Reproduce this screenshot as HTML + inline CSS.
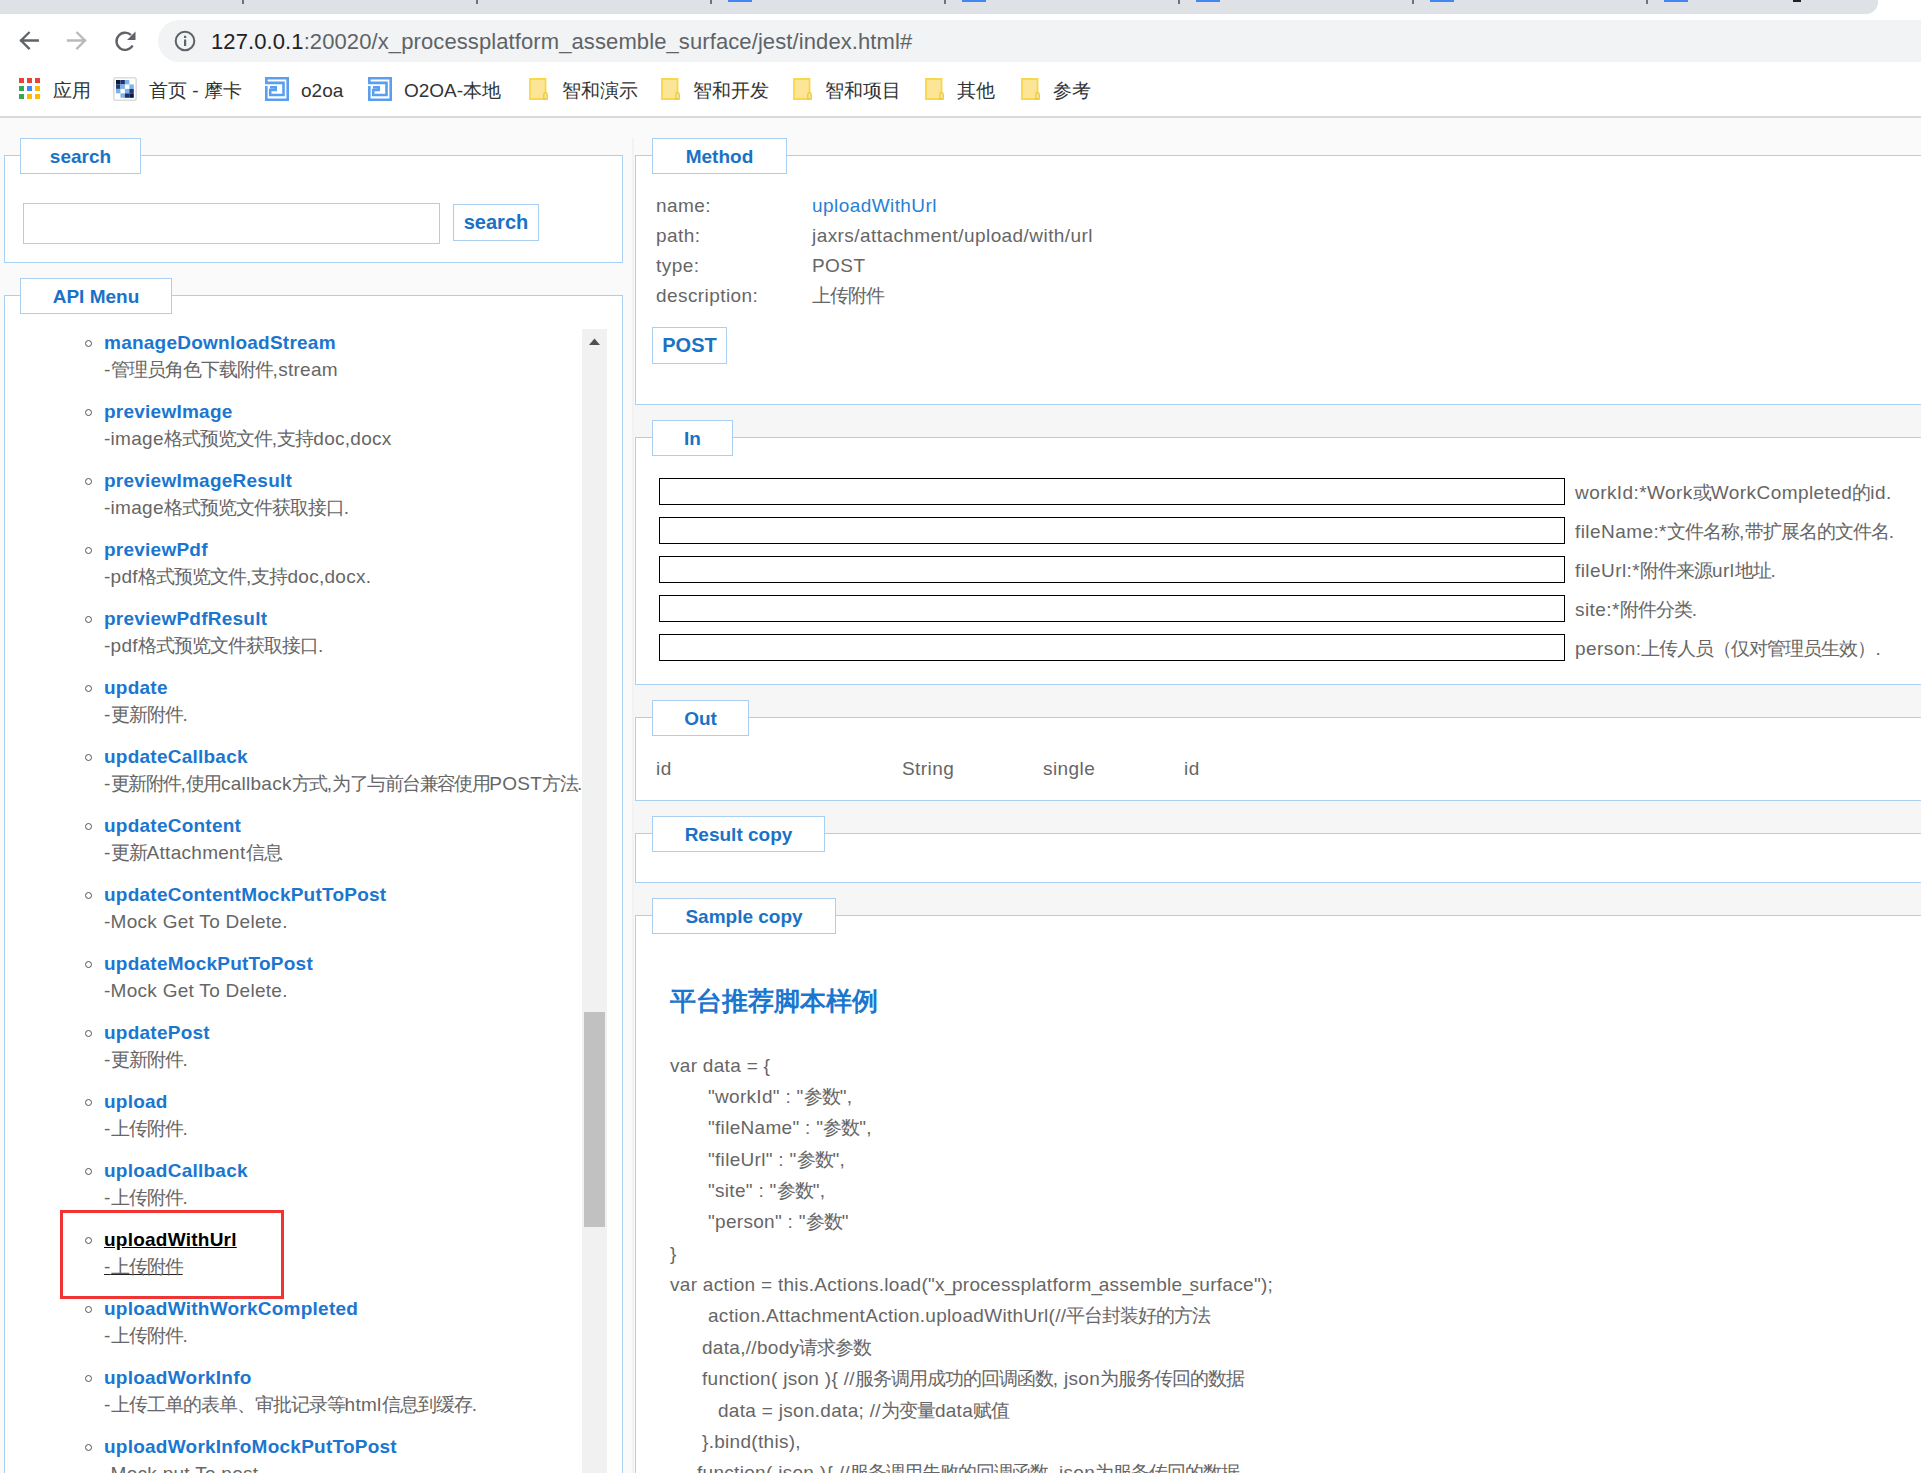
<!DOCTYPE html>
<html><head><meta charset="utf-8">
<style>
*{box-sizing:border-box;margin:0;padding:0}
html,body{width:1921px;height:1473px;overflow:hidden;background:#fafafa;font-family:"Liberation Sans",sans-serif}
.a{position:absolute}
#tabs{left:0;top:0;width:1878px;height:14px;background:#dee1e6;border-bottom-right-radius:12px}
.sep{position:absolute;top:0;width:1.5px;height:4px;background:#6f7378}
.fav{position:absolute;top:0;width:24px;height:1.5px;background:#4285f4}
#toolbar{left:0;top:0;width:1921px;height:116px;background:#fff}
#omni{left:158px;top:20px;width:1800px;height:42px;background:#f1f3f4;border-radius:21px}
#url{left:211px;top:29px;font-size:22px;line-height:25px;color:#5f6368;white-space:nowrap;letter-spacing:0.1px}
#url b{font-weight:normal;color:#202124}
#bmline{left:0;top:116px;width:1921px;height:2px;background:#d9d9d9}
.bm{position:absolute;top:79px;font-size:19px;line-height:24px;color:#333;white-space:nowrap}
.fs{position:absolute;border:1px solid #a9d0f2;background:#fff}
.lg{position:absolute;border:1px solid #a9d0f2;background:#fff;color:#1a72c6;font-weight:bold;font-size:19px;text-align:center;line-height:35px}

.inp{position:absolute;border:1px solid #a9d0f2;background:#fff}
.btn{position:absolute;border:1px solid #a9d0f2;background:#fff;color:#1a72c6;font-weight:bold;font-size:20px;text-align:center}
#list{position:absolute;left:0;top:329px;width:582px;height:1144px;overflow:hidden}
.it{position:absolute;left:104px;white-space:nowrap}
.nm{font-weight:bold;color:#1b76cf;font-size:19px;line-height:24px;height:27px;letter-spacing:0.24px}
.ds{color:#666;font-size:19px;line-height:24px;letter-spacing:0.28px}
.ds .c{font-size:19px;letter-spacing:-1px;line-height:0}
.n7 .c{font-size:19px;letter-spacing:-1.55px}
.bul{position:absolute;left:84.5px;width:7px;height:7px;border:1.2px solid #555;border-radius:50%;margin-top:0.5px}
#sb{position:absolute;left:582px;top:329px;width:25px;height:1144px;background:#f1f1f1}
#thumb{position:absolute;left:584px;top:1012px;width:21px;height:215px;background:#c1c1c1}
.row{position:absolute;font-size:19px;color:#666;white-space:nowrap;line-height:22px;letter-spacing:0.43px}
.row .c{font-size:19px;letter-spacing:-1px;line-height:0}
.pin{position:absolute;left:659px;width:906px;height:27px;border:1px solid #000;background:#fff}
.plb{position:absolute;left:1575px;font-size:19px;color:#666;white-space:nowrap;line-height:22px;letter-spacing:0.43px}
.plb .c{font-size:19px;letter-spacing:-1px;line-height:0}
.code{position:absolute;font-size:19px;color:#666;white-space:nowrap;line-height:22px;letter-spacing:0.3px}
.code .c{font-size:19px;letter-spacing:-1px;line-height:0}
.code .u{letter-spacing:-3.5px}
</style></head><body>
<div id="toolbar" class="a"></div>
<div id="tabs" class="a">
 <div class="sep" style="left:242px"></div><div class="sep" style="left:476px"></div><div class="sep" style="left:710px"></div><div class="sep" style="left:944px"></div><div class="sep" style="left:1178px"></div><div class="sep" style="left:1412px"></div><div class="sep" style="left:1646px"></div>
 <div class="fav" style="left:728px"></div><div class="fav" style="left:962px"></div><div class="fav" style="left:1196px"></div><div class="fav" style="left:1430px"></div><div class="fav" style="left:1664px"></div><div class="fav" style="left:1793px;width:8px;background:#202124"></div>
</div>
<div id="omni" class="a"></div>
<div id="url" class="a"><b>127.0.0.1</b>:20020/x_processplatform_assemble_surface/jest/index.html#</div>
<div id="bmline" class="a"></div>

<!-- nav icons -->
<svg class="a" style="left:14px;top:26px" width="30" height="30" viewBox="0 0 30 30"><path d="M23.8 14.5H7M14.8 6.8L7 14.5l7.8 7.8" fill="none" stroke="#5f6368" stroke-width="2.3" stroke-linecap="square"/></svg>
<svg class="a" style="left:62px;top:26px" width="30" height="30" viewBox="0 0 30 30"><path d="M6 14.5h17M15.3 6.8L23 14.5l-7.8 7.8" fill="none" stroke="#b8babd" stroke-width="2.3" stroke-linecap="square"/></svg>
<svg class="a" style="left:110px;top:26px" width="30" height="30" viewBox="0 0 30 30"><path d="M22.6 19.5A8.6 8.6 0 1 1 21 9" fill="none" stroke="#5f6368" stroke-width="2.4"/><path d="M25.5 5.5v8.5h-8.5z" fill="#5f6368"/></svg>
<svg class="a" style="left:173px;top:29px" width="24" height="24" viewBox="0 0 24 24"><circle cx="12" cy="12" r="9.3" fill="none" stroke="#5f6368" stroke-width="2"/><rect x="11" y="10.5" width="2.2" height="6.5" fill="#5f6368"/><rect x="11" y="6.8" width="2.2" height="2.2" fill="#5f6368"/></svg>
<!-- bookmarks -->
<svg class="a" style="left:19px;top:78px" width="21" height="21" viewBox="0 0 21 21">
<rect x="0" y="0" width="5" height="5" fill="#ea4335"/><rect x="8" y="0" width="5" height="5" fill="#ea4335"/><rect x="16" y="0" width="5" height="5" fill="#ea4335"/>
<rect x="0" y="8" width="5" height="5" fill="#34a853"/><rect x="8" y="8" width="5" height="5" fill="#4285f4"/><rect x="16" y="8" width="5" height="5" fill="#fbbc04"/>
<rect x="0" y="16" width="5" height="5" fill="#34a853"/><rect x="8" y="16" width="5" height="5" fill="#fbbc04"/><rect x="16" y="16" width="5" height="5" fill="#fbbc04"/></svg>
<div class="bm" style="left:53px"><span class="c">应用</span></div>
<svg class="a" style="left:113px;top:77px" width="24" height="24" viewBox="0 0 24 24"><rect x="0.8" y="0.8" width="22.4" height="22.4" rx="2" fill="#fff" stroke="#dcdcdc" stroke-width="1.6"/><rect x="3.00" y="3.00" width="4.45" height="4.45" fill="#0a1a3a"/><rect x="7.45" y="3.00" width="4.45" height="4.45" fill="#1a3370"/><rect x="11.90" y="3.00" width="4.45" height="4.45" fill="#7fb3e8"/><rect x="3.00" y="7.45" width="4.45" height="4.45" fill="#1f3a7a"/><rect x="7.45" y="7.45" width="4.45" height="4.45" fill="#7fb3e8"/><rect x="16.35" y="7.45" width="4.45" height="4.45" fill="#7fb3e8"/><rect x="3.00" y="11.90" width="4.45" height="4.45" fill="#7fb3e8"/><rect x="11.90" y="11.90" width="4.45" height="4.45" fill="#7fb3e8"/><rect x="16.35" y="11.90" width="4.45" height="4.45" fill="#1f3a7a"/><rect x="7.45" y="16.35" width="4.45" height="4.45" fill="#7fb3e8"/><rect x="11.90" y="16.35" width="4.45" height="4.45" fill="#1a3370"/><rect x="16.35" y="16.35" width="4.45" height="4.45" fill="#0a1a3a"/></svg>
<div class="bm" style="left:149px"><span class="c">首页</span> - <span class="c">摩卡</span></div>
<svg class="a" style="left:265px;top:77px" width="24" height="24" viewBox="0 0 24 24"><path d="M1.3 9V22.7H22.7V1.3H1.3V5.9H18.5V18H5.2V13H10.7V10.3H5" fill="none" stroke="#5a9ef0" stroke-width="2.6"/></svg>
<div class="bm" style="left:301px">o2oa</div>
<svg class="a" style="left:368px;top:77px" width="24" height="24" viewBox="0 0 24 24"><path d="M1.3 9V22.7H22.7V1.3H1.3V5.9H18.5V18H5.2V13H10.7V10.3H5" fill="none" stroke="#5a9ef0" stroke-width="2.6"/></svg>
<div class="bm" style="left:404px">O2OA-<span class="c">本地</span></div>
<svg class="a" style="left:529px;top:78px" width="19" height="22" viewBox="0 0 19 22"><path d="M1 1H16.5V21H1z" fill="#fde597" stroke="#f8d74a" stroke-width="1.8"/><path d="M14.8 21V16.4a1.7 1.7 0 0 1 3.4 0V21z" fill="#fde597" stroke="#e9c93e" stroke-width="1.3"/></svg>
<div class="bm" style="left:562px"><span class="c">智和演示</span></div>
<svg class="a" style="left:661px;top:78px" width="19" height="22" viewBox="0 0 19 22"><path d="M1 1H16.5V21H1z" fill="#fde597" stroke="#f8d74a" stroke-width="1.8"/><path d="M14.8 21V16.4a1.7 1.7 0 0 1 3.4 0V21z" fill="#fde597" stroke="#e9c93e" stroke-width="1.3"/></svg>
<div class="bm" style="left:693px"><span class="c">智和开发</span></div>
<svg class="a" style="left:793px;top:78px" width="19" height="22" viewBox="0 0 19 22"><path d="M1 1H16.5V21H1z" fill="#fde597" stroke="#f8d74a" stroke-width="1.8"/><path d="M14.8 21V16.4a1.7 1.7 0 0 1 3.4 0V21z" fill="#fde597" stroke="#e9c93e" stroke-width="1.3"/></svg>
<div class="bm" style="left:825px"><span class="c">智和项目</span></div>
<svg class="a" style="left:925px;top:78px" width="19" height="22" viewBox="0 0 19 22"><path d="M1 1H16.5V21H1z" fill="#fde597" stroke="#f8d74a" stroke-width="1.8"/><path d="M14.8 21V16.4a1.7 1.7 0 0 1 3.4 0V21z" fill="#fde597" stroke="#e9c93e" stroke-width="1.3"/></svg>
<div class="bm" style="left:957px"><span class="c">其他</span></div>
<svg class="a" style="left:1021px;top:78px" width="19" height="22" viewBox="0 0 19 22"><path d="M1 1H16.5V21H1z" fill="#fde597" stroke="#f8d74a" stroke-width="1.8"/><path d="M14.8 21V16.4a1.7 1.7 0 0 1 3.4 0V21z" fill="#fde597" stroke="#e9c93e" stroke-width="1.3"/></svg>
<div class="bm" style="left:1053px"><span class="c">参考</span></div>


<!-- left panel -->
<div class="fs" style="left:4px;top:155px;width:619px;height:108px"></div>
<div class="lg" style="left:20px;top:138px;width:121px;height:36px">search</div>

<div class="fs" style="left:4px;top:295px;width:619px;height:1200px"></div>
<div class="lg" style="left:20px;top:278px;width:152px;height:36px">API Menu</div>

<!-- right panel -->
<div class="a" style="left:632px;top:138px;width:2px;height:1335px;background:#f2f2f2"></div>
<div class="a" style="left:634px;top:405px;width:1287px;height:32px;background:#f6f6f6"></div>
<div class="a" style="left:634px;top:685px;width:1287px;height:32px;background:#f6f6f6"></div>
<div class="a" style="left:634px;top:801px;width:1287px;height:32px;background:#f6f6f6"></div>
<div class="a" style="left:634px;top:883px;width:1287px;height:32px;background:#f6f6f6"></div>

<div class="fs" style="left:635px;top:155px;width:1300px;height:250px"></div>
<div class="lg" style="left:652px;top:138px;width:135px;height:36px">Method</div>
<div class="fs" style="left:635px;top:437px;width:1300px;height:248px"></div>
<div class="lg" style="left:652px;top:420px;width:81px;height:36px">In</div>
<div class="fs" style="left:635px;top:717px;width:1300px;height:84px"></div>
<div class="lg" style="left:652px;top:700px;width:97px;height:36px">Out</div>
<div class="fs" style="left:635px;top:833px;width:1300px;height:50px"></div>
<div class="lg" style="left:652px;top:816px;width:173px;height:36px">Result copy</div>
<div class="fs" style="left:635px;top:915px;width:1300px;height:700px"></div>
<div class="lg" style="left:652px;top:898px;width:184px;height:36px">Sample copy</div>


<div class="inp" style="left:23px;top:203px;width:417px;height:41px"></div>
<div class="btn" style="left:453px;top:204px;width:86px;height:37px;line-height:35px">search</div>
<div id="sb"></div>
<svg class="a" style="left:589px;top:338px" width="12" height="8" viewBox="0 0 12 8"><path d="M0 7L5.5 0.5 11 7z" fill="#505050"/></svg>
<div id="thumb"></div>
<div id="list">
<div class="bul" style="top:10px"></div><div class="it nm" style="top:2px">manageDownloadStream</div><div class="it ds" style="top:29px">-<span class="c">管理员角色下载附件</span>,stream</div>
<div class="bul" style="top:79px"></div><div class="it nm" style="top:71px">previewImage</div><div class="it ds" style="top:98px">-image<span class="c">格式预览文件</span>,<span class="c">支持</span>doc,docx</div>
<div class="bul" style="top:148px"></div><div class="it nm" style="top:140px">previewImageResult</div><div class="it ds" style="top:167px">-image<span class="c">格式预览文件获取接口</span>.</div>
<div class="bul" style="top:217px"></div><div class="it nm" style="top:209px">previewPdf</div><div class="it ds" style="top:236px">-pdf<span class="c">格式预览文件</span>,<span class="c">支持</span>doc,docx.</div>
<div class="bul" style="top:286px"></div><div class="it nm" style="top:278px">previewPdfResult</div><div class="it ds" style="top:305px">-pdf<span class="c">格式预览文件获取接口</span>.</div>
<div class="bul" style="top:355px"></div><div class="it nm" style="top:347px">update</div><div class="it ds" style="top:374px">-<span class="c">更新附件</span>.</div>
<div class="bul" style="top:424px"></div><div class="it nm" style="top:416px">updateCallback</div><div class="it ds n7" style="top:443px">-<span class="c">更新附件</span>,<span class="c">使用</span>callback<span class="c">方式</span>,<span class="c">为了与前台兼容使用</span>POST<span class="c">方法</span>.</div>
<div class="bul" style="top:493px"></div><div class="it nm" style="top:485px">updateContent</div><div class="it ds" style="top:512px">-<span class="c">更新</span>Attachment<span class="c">信息</span></div>
<div class="bul" style="top:562px"></div><div class="it nm" style="top:554px">updateContentMockPutToPost</div><div class="it ds" style="top:581px">-Mock Get To Delete.</div>
<div class="bul" style="top:631px"></div><div class="it nm" style="top:623px">updateMockPutToPost</div><div class="it ds" style="top:650px">-Mock Get To Delete.</div>
<div class="bul" style="top:700px"></div><div class="it nm" style="top:692px">updatePost</div><div class="it ds" style="top:719px">-<span class="c">更新附件</span>.</div>
<div class="bul" style="top:769px"></div><div class="it nm" style="top:761px">upload</div><div class="it ds" style="top:788px">-<span class="c">上传附件</span>.</div>
<div class="bul" style="top:838px"></div><div class="it nm" style="top:830px">uploadCallback</div><div class="it ds" style="top:857px">-<span class="c">上传附件</span>.</div>
<div class="bul" style="top:907px"></div><div class="it nm" style="top:899px;color:#000;text-decoration:underline">uploadWithUrl</div><div class="it ds" style="top:926px;text-decoration:underline;text-decoration-color:#222">-<span class="c">上传附件</span></div>
<div class="bul" style="top:976px"></div><div class="it nm" style="top:968px">uploadWithWorkCompleted</div><div class="it ds" style="top:995px">-<span class="c">上传附件</span>.</div>
<div class="bul" style="top:1045px"></div><div class="it nm" style="top:1037px">uploadWorkInfo</div><div class="it ds" style="top:1064px">-<span class="c">上传工单的表单、审批记录等</span>html<span class="c">信息到缓存</span>.</div>
<div class="bul" style="top:1114px"></div><div class="it nm" style="top:1106px">uploadWorkInfoMockPutToPost</div><div class="it ds" style="top:1133px">-Mock put To post.</div>
</div>
<div class="a" style="left:60px;top:1210px;width:224px;height:89px;border:3px solid #f03333"></div>

<div class="row" style="left:656px;top:195px">name:</div><div class="row" style="left:812px;top:195px;color:#2a7fd4">uploadWithUrl</div>
<div class="row" style="left:656px;top:225px">path:</div><div class="row" style="left:812px;top:225px">jaxrs/attachment/upload/with/url</div>
<div class="row" style="left:656px;top:255px">type:</div><div class="row" style="left:812px;top:255px">POST</div>
<div class="row" style="left:656px;top:285px">description:</div><div class="row" style="left:812px;top:285px"><span class="c">上传附件</span></div>
<div class="btn" style="left:652px;top:327px;width:75px;height:37px;line-height:35px">POST</div>
<div class="pin" style="top:478px"></div><div class="plb" style="top:482px">workId:*Work<span class="c">或</span>WorkCompleted<span class="c">的</span>id.</div>
<div class="pin" style="top:517px"></div><div class="plb" style="top:521px">fileName:*<span class="c">文件名称</span>,<span class="c">带扩展名的文件名</span>.</div>
<div class="pin" style="top:556px"></div><div class="plb" style="top:560px">fileUrl:*<span class="c">附件来源</span>url<span class="c">地址</span>.</div>
<div class="pin" style="top:595px"></div><div class="plb" style="top:599px">site:*<span class="c">附件分类</span>.</div>
<div class="pin" style="top:634px"></div><div class="plb" style="top:638px">person:<span class="c">上传人员（仅对管理员生效）</span>.</div>

<div class="row" style="left:656px;top:758px">id</div><div class="row" style="left:902px;top:758px">String</div><div class="row" style="left:1043px;top:758px">single</div><div class="row" style="left:1184px;top:758px">id</div>
<div class="a" style="left:670px;top:984px;font-size:25.7px;font-weight:bold;color:#1b76cf;white-space:nowrap"><span class="c">平台推荐脚本样例</span></div>
<div class="code" style="left:670px;top:1055px">var data = {</div>
<div class="code" style="left:708px;top:1086px">"workId" : "<span class="c">参数</span>",</div>
<div class="code" style="left:708px;top:1117px">"fileName" : "<span class="c">参数</span>",</div>
<div class="code" style="left:708px;top:1149px">"fileUrl" : "<span class="c">参数</span>",</div>
<div class="code" style="left:708px;top:1180px">"site" : "<span class="c">参数</span>",</div>
<div class="code" style="left:708px;top:1211px">"person" : "<span class="c">参数</span>"</div>
<div class="code" style="left:670px;top:1243px">}</div>
<div class="code" style="left:670px;top:1274px">var action = this.Actions.load("x<span class="u">_</span>processplatform<span class="u">_</span>assemble<span class="u">_</span>surface");</div>
<div class="code" style="left:708px;top:1305px">action.AttachmentAction.uploadWithUrl(//<span class="c">平台封装好的方法</span></div>
<div class="code" style="left:702px;top:1337px">data,//body<span class="c">请求参数</span></div>
<div class="code" style="left:702px;top:1368px">function( json ){ //<span class="c">服务调用成功的回调函数</span>, json<span class="c">为服务传回的数据</span></div>
<div class="code" style="left:718px;top:1400px">data = json.data; //<span class="c">为变量</span>data<span class="c">赋值</span></div>
<div class="code" style="left:702px;top:1431px">}.bind(this),</div>
<div class="code" style="left:697px;top:1462px">function( json ){ //<span class="c">服务调用失败的回调函数</span>, json<span class="c">为服务传回的数据</span></div>
</body></html>
